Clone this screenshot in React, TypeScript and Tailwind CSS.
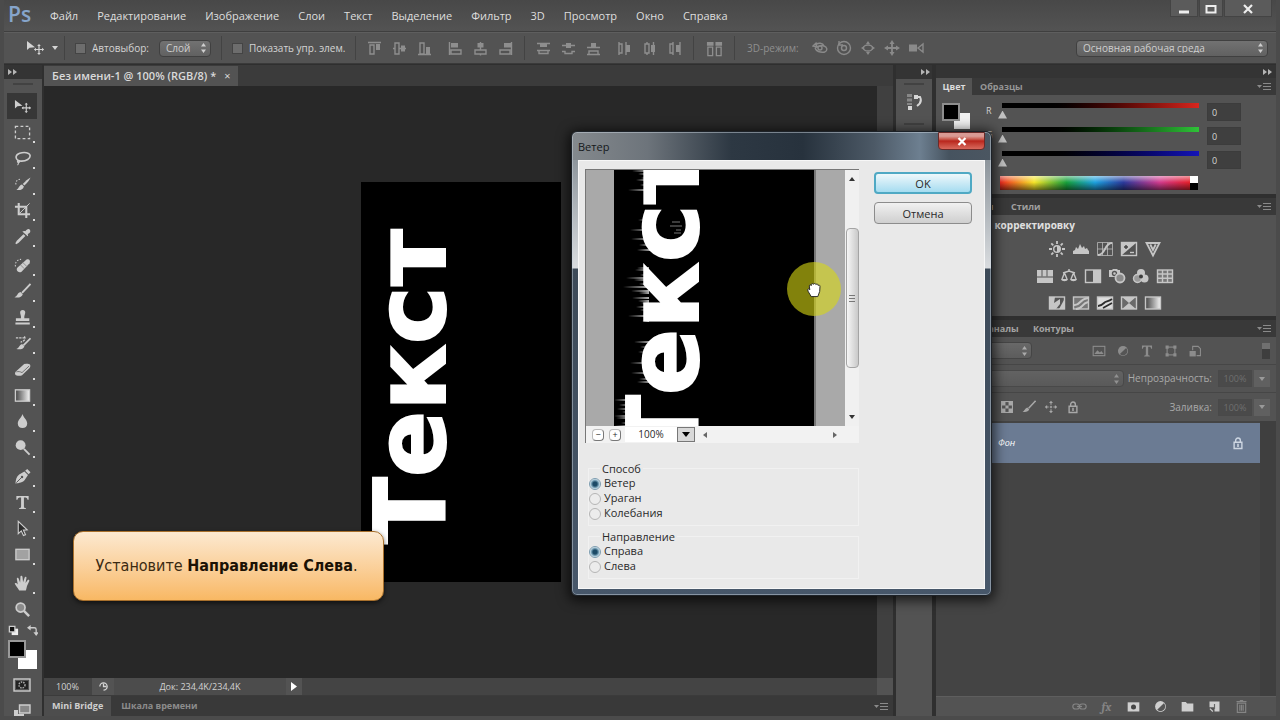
import type { ReactNode } from "react";

const MENU = [
  "Файл",
  "Редактирование",
  "Изображение",
  "Слои",
  "Текст",
  "Выделение",
  "Фильтр",
  "3D",
  "Просмотр",
  "Окно",
  "Справка",
];

function Glyph({
  children,
  size = 18,
  box = 18,
}: {
  children: ReactNode;
  size?: number;
  box?: number;
}) {
  return (
    <svg
      width={size}
      height={size}
      viewBox={`0 0 ${box} ${box}`}
      fill="none"
      stroke="currentColor"
      strokeWidth="1.4"
      aria-hidden="true"
      className="block shrink-0"
    >
      {children}
    </svg>
  );
}

const F = { fill: "currentColor", stroke: "none" };

const moveGlyph = (
  <>
    <path d="M1 2v9l2.600-2.300L9 8.300z" {...F} />
    <path d="M13 6v9M8.500 10.500h9" strokeWidth="1.200" />
    <path d="M13 5l1.800 2h-3.600zM13 16l1.800-2h-3.600zM8 10.500l2-1.800v3.600zM18 10.500l-2-1.800v3.600z" {...F} />
  </>
);

// The toolbar is split into four groups, like the separators in the real one.
const TOOLS: { name: string; icon: ReactNode; corner?: boolean }[][] = [
  [
    { name: "Перемещение", icon: moveGlyph },
    {
      name: "Прямоугольная область",
      corner: true,
      icon: <rect x="1.500" y="2.500" width="15" height="13" strokeDasharray="3 2.400" />,
    },
    {
      name: "Лассо",
      corner: true,
      icon: (
        <>
          <path d="M4.500 11.500C1 9 1.500 5 6 3.500s10.500-1 11 2.300-4 6-9 6c-1.500 0-2.500-.2-3.500-.8z" strokeWidth="1.700" />
          <path d="M4.500 11c-1.500 1-1 2.500.5 2.200s1.500-2 0-2.200M4.500 13c.5 1.500 0 2.500-.8 3" strokeWidth="1.200" />
        </>
      ),
    },
    {
      name: "Быстрое выделение",
      corner: true,
      icon: (
        <>
          <path d="M17.500 1.500c-1 2.500-4 6.500-6.500 8.500l-1.700-1.600C11.500 6 15 2.800 17.500 1.500z" {...F} />
          <path d="M8.500 9l2 2c-1 3.500-4.500 4.500-8 3.500 2.500-.5 2.800-5 6-5.500z" {...F} />
          <path d="M2 9c-.5-3.500 2-6 6-5.500" strokeDasharray="1.600 1.600" strokeWidth="1.100" />
        </>
      ),
    },
    {
      name: "Рамка",
      corner: true,
      icon: (
        <>
          <path d="M5 1v12h12M1 5h12v12" strokeWidth="2.200" />
          <path d="M6 12L16.500 1.500" strokeWidth="1" />
        </>
      ),
    },
    {
      name: "Пипетка",
      corner: true,
      icon: (
        <>
          <path d="M10 3.500c1-1 2 0 2 0s1.500-3 3.500-2.500 2 2.500 1.500 3.500-2.500 2-2.500 2 1 1.200 0 2.200L8.800 3.800z" {...F} />
          <path d="M10.500 7l-7 7L2 16.500 4.500 15l7-7" />
        </>
      ),
    },
  ],
  [
    {
      name: "Точечная восстанавливающая кисть",
      corner: true,
      icon: (
        <>
          <path d="M3.500 11.500L13 3c2-1.500 5 .5 3.500 3.500L8 15.500c-3 2-6.500-1-4.500-4z" {...F} />
          <path d="M7 8.500l4 4M9.500 6l4 4" stroke="#8a8a8a" strokeWidth="1" />
          <path d="M1.500 10c-.5-4 1.500-7 6-7.500" strokeDasharray="1.600 1.600" strokeWidth="1.100" />
        </>
      ),
    },
    {
      name: "Кисть",
      corner: true,
      icon: (
        <>
          <path d="M17.500 1L8.500 10.500" strokeWidth="2" />
          <path d="M6.800 9.500l2.500 2.300c-1 3-4.500 4.200-8.800 3.200 3-.8 3-4.500 6.300-5.500z" {...F} />
        </>
      ),
    },
    {
      name: "Штамп",
      corner: true,
      icon: (
        <path d="M6.500 3.800a2.700 2.700 0 0 1 5.400 0c0 2-1.200 3-1 6h5.300v3H2v-3h5.400c.2-3-.9-4-.9-6zM1.500 14.300h15.200v2H1.500z" {...F} />
      ),
    },
    {
      name: "Архивная кисть",
      corner: true,
      icon: (
        <>
          <path d="M17.500 3.500L10 11" strokeWidth="1.900" />
          <path d="M8.500 9.500l2.500 2.300c-1 3-4.500 4-8.500 3 3-.8 3-4.300 6-5.300z" {...F} />
          <path d="M2 3h9M11 1.500c2 3-1 5.500-4 6" strokeWidth="1.300" strokeDasharray="2.500 1" />
        </>
      ),
    },
    {
      name: "Ластик",
      corner: true,
      icon: (
        <>
          <path d="M2 11l8.500-7.500c1-.8 5.500-1 6.500.5.800 1.500 0 3-1 4L8.500 15C7 16 2.500 16 1.500 14.500.8 13.500 1 12 2 11z" {...F} />
          <path d="M2.500 11.500c2-.6 4-.4 6 .8l7.500-7" stroke="#6f6f6f" strokeWidth="1" />
        </>
      ),
    },
    {
      name: "Градиент",
      corner: true,
      icon: (
        <>
          <defs>
            <linearGradient id="tool-fade">
              <stop stopColor="#444" />
              <stop offset="1" stopColor="#f4f4f4" />
            </linearGradient>
          </defs>
          <rect x="1.500" y="3" width="15" height="12" fill="url(#tool-fade)" />
        </>
      ),
    },
    {
      name: "Размытие",
      corner: true,
      icon: <path d="M9 1c1 4 5 6 5 10.200C14 14.500 11.800 16 9 16s-5-1.500-5-4.800C4 7 8 5 9 1z" {...F} />,
    },
    {
      name: "Осветлитель",
      corner: true,
      icon: (
        <>
          <circle cx="7" cy="6.500" r="5.200" {...F} />
          <path d="M10.500 10.500l6 6" strokeWidth="2" />
        </>
      ),
    },
  ],
  [
    {
      name: "Перо",
      corner: true,
      icon: (
        <>
          <path d="M1.500 16.500c.5-4 1-7.500 4-9.500L11 3.800l3.800 3.700-3.300 5c-2 3-6 3.500-10 4zM11.800 3l2.200-2 3.500 3.500-2 2.200z" {...F} />
          <path d="M2.500 15.500L8 10" stroke="#535353" strokeWidth="1" />
          <circle cx="8.500" cy="9.500" r="1.300" fill="#535353" stroke="none" />
        </>
      ),
    },
    {
      name: "Горизонтальный текст",
      corner: true,
      icon: <path d="M2.500 2h13v4h-1.200c-.2-1.800-.8-2.400-3.800-2.400V13c0 1.500.5 1.800 2.200 2v1H5.300v-1c1.700-.2 2.200-.5 2.200-2V3.600c-3 0-3.600.6-3.800 2.400H2.500z" {...F} />,
    },
    {
      name: "Выделение контура",
      corner: true,
      icon: <path d="M4.500 1.500v13l3.200-3 2.300 5 2.200-1-2.300-4.800 4-.4z" fill="#2c2c2c" strokeWidth="1.200" />,
    },
    {
      name: "Прямоугольник",
      corner: true,
      icon: <rect x="2" y="3.500" width="14" height="11" fill="#a2a2a2" />,
    },
  ],
  [
    {
      name: "Рука",
      corner: true,
      icon: (
        <path d="M5.500 16.500C4 13.500 1.500 11 .8 9.300c0-1.300 1.700-1.300 3.200.7L3 4.300c-.2-1.500 1.500-1.800 2-.4l1.500 4L6.800 2c0-1.500 2-1.500 2.200 0l.6 5.600 1.700-5c.5-1.300 2.100-.9 1.900.6l-1 5.400 2.300-3.200c.9-1.100 2.200-.2 1.600 1.100L14 11c-.7 2-.8 3.600-1.500 5.500z" {...F} />
      ),
    },
    {
      name: "Масштаб",
      icon: (
        <>
          <circle cx="7" cy="7" r="4.700" fill="#8b8b8b" strokeWidth="1.800" />
          <path d="M10.500 10.500l5.500 5.500" strokeWidth="2.600" />
        </>
      ),
    },
  ],
];

const ALIGN_ICONS: ReactNode[][] = [
  [
    <>
      <path d="M1 1.500h13M3 4v9h4V4z" />
      <path d="M9 3h4v6H9z" {...F} />
    </>,
    <>
      <path d="M1 7.500h2M7 7.500h7M3 2v11h4V2z" />
      <path d="M9 4.500h4v6H9z" {...F} />
    </>,
    <>
      <path d="M1 13.500h13M3 2v11h4V2z" />
      <path d="M9 6h4v7H9z" {...F} />
    </>,
    <>
      <path d="M1.500 1v13M3 9h10v4H3z" />
      <path d="M3 2h7v4.500H3z" {...F} />
    </>,
    <>
      <path d="M7.500 1v8M7.500 13v1.500M2 9h11v4H2z" />
      <path d="M4.500 2h6v4.500h-6z" {...F} />
    </>,
    <>
      <path d="M13.500 1v13M2 9h10v4H2z" />
      <path d="M6 2h7v4.500H6z" {...F} />
    </>,
  ],
  [
    <>
      <path d="M1 2.500h13M1 9.500h13M3 9.500v3h9v-3" />
      <path d="M4 3h7v3H4z" {...F} />
    </>,
    <>
      <path d="M1 4.500h13M1 10.500h3v2h7v-2h3" />
      <path d="M5 2h5v5H5z" {...F} />
    </>,
    <>
      <path d="M1 6.500h13M1 13.500h13M3 13v-3h9v3" />
      <path d="M5 2h5v4H5z" {...F} />
    </>,
    <>
      <path d="M2 1v13M2 3h3v9H2M9 1v13" />
      <path d="M9 4h4v7H9z" {...F} />
    </>,
    <>
      <path d="M5 1v2M5 12v2M3 3h4v9H3zM11.500 1v13" />
      <path d="M9 4h4v7H9z" {...F} />
    </>,
    <>
      <path d="M6 1v13M6 3H3v9h3M13 1v13" />
      <path d="M9 4h4v7H9z" {...F} />
    </>,
  ],
];

const MODE_ICONS: ReactNode[] = [
  <>
    <path d="M3 5c3-3 8-2 9 1 3 1 4 4 1 6M12 6c-3-1-6 0-9 2M3 8c1 3 5 5 10 4M1 6l3-3 1 4z" />
    <circle cx="8" cy="8" r="2" />
  </>,
  <>
    <circle cx="8" cy="8" r="6.500" />
    <circle cx="8" cy="8" r="2.500" />
    <path d="M3 1v4h4" />
  </>,
  <>
    <path d="M8 1L6 4h4zM8 15l-2-3h4zM1 8l3-2v4zM15 8l-3-2v4z" {...F} />
    <ellipse cx="8" cy="8" rx="4.500" ry="3" />
  </>,
  <>
    <path d="M8 0L5.500 4h5zM8 16l-2.500-4h5zM0 8l4-2.500v5zM16 8l-4-2.500v5z" {...F} />
    <path d="M8 3v10M3 8h10" strokeWidth="1.800" />
  </>,
  <>
    <path d="M1 4.500h8v7H1z" {...F} />
    <path d="M10 8l5-4v8z" />
  </>,
];

const ADJUSTMENTS: { name: string; icon: ReactNode }[][] = [
  [
    {
      name: "Яркость/Контрастность",
      icon: (
        <>
          <circle cx="9" cy="9" r="3.300" />
          <path d="M9 5.700a3.300 3.300 0 0 1 0 6.600z" {...F} />
          <path d="M9 1v3M9 14v3M1 9h3M14 9h3M3.300 3.300l2 2M12.700 12.700l2 2M3.300 14.700l2-2M12.700 5.300l2-2" strokeWidth="1.800" />
        </>
      ),
    },
    {
      name: "Уровни",
      icon: <path d="M1 14v-3l2-1 1-3 2 2 2-5 2 4 2-2 1 3 2-1 1 2 1 1v3z" {...F} />,
    },
    {
      name: "Кривые",
      icon: (
        <>
          <path d="M1.500 2.500h15v13h-15zM1.500 9h15M6.500 2.500v13M11.500 2.500v13" strokeWidth="1" opacity=".7" />
          <path d="M2 15c8 0 6-12 14-12" strokeWidth="1.800" />
        </>
      ),
    },
    {
      name: "Экспозиция",
      icon: (
        <>
          <rect x="1.500" y="2.500" width="15" height="13" />
          <path d="M2 3h14L2 15z" {...F} />
          <path d="M4 7h4M6 5v4" stroke="#444" />
          <path d="M10 12.500h4" />
        </>
      ),
    },
    {
      name: "Сочность",
      icon: <path d="M2.500 3h13L9 15.500zM6.300 4.500L9 10l2.700-5.500" strokeWidth="1.800" />,
    },
  ],
  [
    {
      name: "Цветовой тон/Насыщенность",
      icon: (
        <>
          <rect x="1" y="3" width="16" height="13" {...F} />
          <path d="M1 10h16M6 3v7M11 3v7" stroke="#777" />
        </>
      ),
    },
    {
      name: "Цветовой баланс",
      icon: (
        <>
          <path d="M9 2v3M3 6l6-2 6 2M4.500 6L2 12M4.500 6L7 12M13.500 6L11 12M13.500 6l2.500 6" />
          <path d="M1 12h7c-.5 3-6.500 3-7 0zM10 12h7c-.5 3-6.500 3-7 0z" {...F} />
        </>
      ),
    },
    {
      name: "Черно-белое",
      icon: (
        <>
          <rect x="1.500" y="3" width="15" height="12.500" />
          <path d="M9 3h7.500v12.500H9z" {...F} />
        </>
      ),
    },
    {
      name: "Фотофильтр",
      icon: (
        <>
          <path d="M1 3h3l1-1h4l1 1h2v7H1z" {...F} />
          <circle cx="6.500" cy="6.500" r="2" stroke="#555" />
          <circle cx="12" cy="11" r="4.500" fill="#8a8a8a" strokeWidth="1.800" />
        </>
      ),
    },
    {
      name: "Микширование каналов",
      icon: (
        <>
          <circle cx="9" cy="6" r="4" {...F} />
          <circle cx="5.500" cy="11.500" r="4" fill="#9a9a9a" />
          <circle cx="12.500" cy="11.500" r="4" {...F} />
          <circle cx="9" cy="9.500" r="2" fill="#3c3c3c" stroke="none" />
        </>
      ),
    },
    {
      name: "Поиск цвета",
      icon: (
        <>
          <rect x="1.500" y="3" width="15" height="12.500" fill="#777" />
          <path d="M1.500 7h15M1.500 11.300h15M6.500 3v12.500M11.500 3v12.500" />
        </>
      ),
    },
  ],
  [
    {
      name: "Инверсия",
      icon: (
        <>
          <rect x="1.500" y="3" width="15" height="12" fill="#555" />
          <path d="M2 15V3h5l-1 6 6-4v5l-4 5zM16 3v12h-5l5-9z" {...F} />
        </>
      ),
    },
    {
      name: "Постеризация",
      icon: (
        <>
          <rect x="1.500" y="3" width="15" height="12" fill="#777" />
          <path d="M2 11c6 1 5-6 14-7M4 15c7 0 5-5 12-7" strokeWidth="2" />
        </>
      ),
    },
    {
      name: "Изогелия",
      icon: (
        <>
          <rect x="1.500" y="3" width="15" height="12" fill="#ddd" />
          <path d="M2 12c3 0 4-1 6-3s4-1 8-4M7 14l9-5" stroke="#2d2d2d" strokeWidth="1.800" />
        </>
      ),
    },
    {
      name: "Выборочная коррекция цвета",
      icon: (
        <>
          <rect x="1.500" y="3" width="15" height="12" fill="#6a6a6a" />
          <path d="M2 3h14l-7 6zM2 15h14L9 9z" {...F} />
        </>
      ),
    },
    {
      name: "Карта градиента",
      icon: <rect x="1.500" y="3" width="15" height="12" fill="url(#tool-fade)" />,
    },
  ],
];

const trashGlyph = <path d="M4 5h10v11H4zM3 3h12M7 2h4M7 7v7M9 7v7M11 7v7" />;
const brushGlyph = TOOLS[1][1].icon;
const halfCircle = (
  <>
    <circle cx="9" cy="9" r="6.500" {...F} />
    <path d="M5 13L13 5A5.600 5.600 0 0 1 5 13z" fill="#555" stroke="none" />
  </>
);
const fourWay = (
  <>
    <path d="M9 3v12M3 9h12" strokeDasharray="3 1.500" />
    <path d="M9 1L6.500 4h5zM9 17l-2.500-3h5zM1 9l3-2.500v5zM17 9l-3-2.500v5z" {...F} />
  </>
);
const padlock = (
  <>
    <path d="M4 8h10v8H4z" strokeWidth="1.800" />
    <path d="M6 8V5.500a3 3 0 0 1 6 0V8" strokeWidth="1.800" />
    <path d="M9 10v4" strokeWidth="2" />
  </>
);

const FILTERS: { name: string; icon: ReactNode }[] = [
  {
    name: "Пиксельные слои",
    icon: (
      <>
        <rect x="1.500" y="3" width="15" height="12" />
        <path d="M3 13l4-5 3 3 2-2 3 4z" {...F} />
      </>
    ),
  },
  { name: "Корректирующие слои", icon: halfCircle },
  { name: "Текстовые слои", icon: TOOLS[2][1].icon },
  {
    name: "Слои-фигуры",
    icon: (
      <>
        <rect x="4" y="4" width="10" height="10" />
        <path d="M2 2h4v4H2zM12 2h4v4h-4zM2 12h4v4H2zM12 12h4v4h-4z" {...F} />
      </>
    ),
  },
  {
    name: "Смарт-объекты",
    icon: (
      <>
        <path d="M6 8V3h7l3 3v9h-5" />
        <path d="M2 9h8v7H2z" {...F} />
      </>
    ),
  },
];

const LAYER_ACTIONS: { name: string; dim?: boolean; icon: ReactNode }[] = [
  {
    name: "Связать слои",
    dim: true,
    icon: (
      <>
        <rect x="1" y="6" width="8" height="6" rx="3" />
        <rect x="9" y="6" width="8" height="6" rx="3" />
        <path d="M6 9h6" />
      </>
    ),
  },
  { name: "Стиль слоя", dim: true, icon: null },
  {
    name: "Маска слоя",
    icon: (
      <>
        <rect x="2" y="4" width="14" height="11" {...F} />
        <circle cx="9" cy="9.500" r="3" fill="#444" stroke="none" />
      </>
    ),
  },
  { name: "Корректирующий слой", icon: halfCircle },
  { name: "Новая группа", icon: <path d="M2 3.500h5l1.500 2H16V15H2z" {...F} /> },
  {
    name: "Новый слой",
    icon: (
      <>
        <path d="M3 3h12v12H9V10H3z" {...F} />
        <path d="M3.500 11.500L7 15" />
        <path d="M9 6v6" stroke="#666" />
      </>
    ),
  },
  { name: "Удалить слой", dim: true, icon: trashGlyph },
];

// Streak lengths of the wind effect; every entry is one streak, the gaps follow from STEPS.
const WIND = [5, 13, 3, 19, 7, 2, 11, 4, 16, 6, 9, 3, 22, 5, 8, 14, 2, 10, 6, 17];
const STEPS = [3, 4, 2, 5, 3, 2, 4];
const WIND_ZONES = [
  { x: 31, from: 48, to: 92 },
  { x: 33, from: 116, to: 152 },
  { x: 31, from: 168, to: 222 },
  { x: 33, from: 242, to: 284 },
  { x: 13, from: 300, to: 356 },
];

const STREAKS = WIND_ZONES.flatMap((zone, z) => {
  const paths: string[] = [];
  let y = zone.from;
  for (let i = 0; y < zone.to; i++) {
    const len = Math.min(WIND[(i * 3 + z * 7) % WIND.length], zone.x);
    paths.push(`M${zone.x - len} ${y}L${zone.x + 4} ${y - 1}v2z`);
    y += STEPS[(i + z) % STEPS.length];
  }
  return paths;
});

function Artwork({ windy = false }: { windy?: boolean }) {
  return (
    <svg
      width="200"
      height="400"
      viewBox="0 0 200 400"
      className="block shrink-0 overflow-visible bg-black"
    >
      {windy && (
        <>
          <path d={STREAKS.join("")} fill="#fff" opacity=".7" />
          <path d="M58 122h8M56 126h12M60 133h7M62 130h5M54 262h6" stroke="#777" />
        </>
      )}
      <text
        transform="translate(84 362) rotate(-90)"
        fill="#fff"
        stroke="#fff"
        strokeWidth="2"
        fontFamily="DejaVu Sans, sans-serif"
        fontWeight="700"
        fontSize="98"
      >
        Текст
      </text>
    </svg>
  );
}

function Chevrons() {
  return (
    <svg width="9" height="6" viewBox="0 0 9 6" className="block" fill="#b5b5b5" aria-hidden="true">
      <path d="M0 0l4 3-4 3zM5 0l4 3-4 3z" />
    </svg>
  );
}

function PanelMenu() {
  return (
    <button aria-label="Меню панели" className="ml-auto px-1 text-[#8a8a8a]">
      <svg width="15" height="9" viewBox="0 0 15 9" className="block" aria-hidden="true">
        <path d="M0 3h5L2.500 6z" fill="currentColor" />
        <path d="M6 1.500h8M6 4.500h8M6 7.500h8" stroke="currentColor" />
      </svg>
    </button>
  );
}

function Spinner() {
  return (
    <svg
      width="7"
      height="10"
      viewBox="0 0 7 10"
      fill="currentColor"
      aria-hidden="true"
      className="pointer-events-none absolute right-1 top-1/2 -translate-y-1/2"
    >
      <path d="M3.500 0L6 3.500H1zM3.500 10L6 6.500H1z" />
    </svg>
  );
}

function Picker({ label, value, className }: { label: string; value: string; className: string }) {
  return (
    <div className={`relative text-[#cfcfcf] ${className}`}>
      <select
        aria-label={label}
        className="block h-[17px] w-full appearance-none rounded-sm border border-[#404040] bg-linear-to-b from-[#727272] to-[#616161] pl-1.5 text-[10px] leading-none font-medium text-inherit"
      >
        <option>{value}</option>
      </select>
      <Spinner />
    </div>
  );
}

function Divider() {
  return <div className="h-6 w-px shrink-0 bg-[#434343]" />;
}

function IconButton({
  label,
  className = "w-[25px]",
  children,
}: {
  label: string;
  className?: string;
  children: ReactNode;
}) {
  return (
    <button aria-label={label} className={`flex shrink-0 items-center justify-center ${className}`}>
      {children}
    </button>
  );
}

function TitleBar() {
  return (
    <header className="flex h-8 shrink-0 items-start border-b border-[#3f3f3f] bg-linear-to-b from-[#484848] to-[#535353]">
      <span className="w-[39px] pl-1 text-[21px] leading-[29px] font-semibold text-[#86a5cb]">Ps</span>
      <nav className="flex items-center gap-[19px] pl-[7px] text-[11px] leading-8 font-medium text-[#dedede]">
        {MENU.map((item) => (
          <a key={item} href="#">
            {item}
          </a>
        ))}
      </nav>
      <div className="mr-1 ml-auto flex gap-px text-[#eeeeee]">
        <button aria-label="Свернуть" className="h-[17px] w-7 border border-t-0 border-[#444] bg-[#5b5b5b]">
          <Glyph size={26} box={26}>
            <path d="M8 12h10" strokeWidth="3" />
          </Glyph>
        </button>
        <button aria-label="Развернуть" className="h-[17px] w-6 border border-t-0 border-[#444] bg-[#5b5b5b]">
          <svg width="22" height="16" viewBox="0 0 22 16" aria-hidden="true">
            <rect x="6.500" y="6" width="9" height="6.500" fill="none" stroke="currentColor" strokeWidth="2" />
          </svg>
        </button>
        <button aria-label="Закрыть" className="flex h-[17px] w-12 justify-center border border-t-0 border-[#444] bg-[#5b5b5b]">
          <svg width="12" height="16" viewBox="0 0 12 16" aria-hidden="true">
            <path d="M2 5l8 8M10 5l-8 8" stroke="currentColor" strokeWidth="2.200" />
          </svg>
        </button>
      </div>
    </header>
  );
}

function OptionsBar() {
  return (
    <div className="flex h-8 shrink-0 items-center border-t border-b border-t-[#5e5e5e] border-b-[#3a3a3a] bg-[#535353] text-[10px] text-[#d4d4d4]">
      <div className="flex w-[60px] items-center gap-2 pl-[22px]">
        <Glyph>{moveGlyph}</Glyph>
        <svg width="6" height="4" viewBox="0 0 6 4" fill="currentColor" aria-hidden="true">
          <path d="M0 0h6L3 4z" />
        </svg>
      </div>
      <Divider />
      <label className="flex w-[94px] items-center gap-1.5 pl-2.5 font-medium">
        <input type="checkbox" className="size-[11px] appearance-none border border-[#444] bg-[#6d6d6d]" />
        Автовыбор:
      </label>
      <Picker label="Автовыбор" value="Слой" className="w-[52px]" />
      <div className="w-2.5" />
      <Divider />
      <label className="flex w-[133px] items-center gap-1.5 pl-2.5 font-medium">
        <input type="checkbox" className="size-[11px] appearance-none border border-[#444] bg-[#6d6d6d]" />
        <span className="whitespace-nowrap">Показать упр. элем.</span>
      </label>
      <Divider />
      {ALIGN_ICONS.map((set, s) => (
        <div key={s} className="flex items-center text-[#8e8e8e]">
          <div className="flex px-[6px]">
            {set.slice(0, 3).map((icon, i) => (
              <IconButton key={i} label={`Выравнивание ${i + 1}`}>
                <Glyph size={15} box={15}>{icon}</Glyph>
              </IconButton>
            ))}
          </div>
          <div className="flex pr-[6px]">
            {set.slice(3).map((icon, i) => (
              <IconButton key={i} label={`Распределение ${i + 1}`}>
                <Glyph size={15} box={15}>{icon}</Glyph>
              </IconButton>
            ))}
          </div>
          <Divider />
        </div>
      ))}
      <IconButton label="Автоматическое выравнивание" className="w-10 text-[#8e8e8e]">
        <Glyph size={17}>
          <path d="M1 2h7v4H1zM10 2h7v4h-7z" {...F} />
          <path d="M2 7.500h5v9H2zM11 7.500h5v9h-5z" />
        </Glyph>
      </IconButton>
      <Divider />
      <span className="w-[73px] pl-3 whitespace-nowrap text-[#8f8f8f]">3D-режим:</span>
      <div className="flex text-[#8a8a8a]">
        {MODE_ICONS.map((icon, i) => (
          <IconButton key={i} label={`3D-режим ${i + 1}`} className="w-6">
            <Glyph size={16} box={16}>{icon}</Glyph>
          </IconButton>
        ))}
      </div>
      <Picker label="Рабочая среда" value="Основная рабочая среда" className="mr-2 ml-auto w-48" />
    </div>
  );
}

function Toolbar() {
  return (
    <aside className="flex w-[38px] shrink-0 flex-col bg-[#535353] text-[#cdcdcd]">
      <div className="flex h-[14px] shrink-0 items-center bg-[#343434] pl-1">
        <Chevrons />
      </div>
      <div className="mx-auto mt-1 mb-2 h-0.5 w-5 shrink-0 bg-[#424242]" />
      {TOOLS.map((group, g) => (
        <div key={g} className="mb-[3px] flex flex-col pl-[3px]">
          {group.map((tool, i) => (
            <button
              key={tool.name}
              aria-label={tool.name}
              className={`relative flex h-[26px] w-[30px] items-center justify-center ${
                g === 0 && i === 0 ? "bg-[#373737]" : ""
              }`}
            >
              <Glyph size={17}>{tool.icon}</Glyph>
              {tool.corner && <i className="absolute right-0.5 bottom-0.5 size-0.5 bg-[#dcdcdc]" />}
            </button>
          ))}
        </div>
      ))}
      <div className="flex items-center justify-between px-1">
        <Glyph size={11} box={12}>
          <path d="M4 4h7v7H4z" fill="#eee" stroke="none" />
          <path d="M1.500 1.500h6v6h-6z" fill="#111" />
        </Glyph>
        <Glyph size={11} box={12}>
          <path d="M3 3h5c1 0 2 1 2 2v4" />
          <path d="M0 3l4-3v6zM10 12L7 8h6z" {...F} />
        </Glyph>
      </div>
      <div className="relative mt-1 h-[32px] shrink-0">
        <div className="absolute top-[10px] left-3.5 size-[19px] bg-white" />
        <div className="absolute top-0 left-1 size-[18px] border-2 border-[#999] bg-black" />
      </div>
      <button aria-label="Быстрая маска" className="mt-1 pl-[9px]">
        <Glyph size={18}>
          <rect x="1" y="3" width="16" height="12" />
          <rect x="3" y="5" width="12" height="8" fill="#222" stroke="none" />
          <circle cx="9" cy="9" r="3" stroke="#aaa" strokeDasharray="1.500 1" />
        </Glyph>
      </button>
      <button aria-label="Режим экрана" className="mt-2 pl-[9px]">
        <Glyph size={18}>
          <path d="M6.500 3h10.500v8H6.500z" fill="#888" />
          <path d="M1 8h4v4h6v4H1z" {...F} />
        </Glyph>
      </button>
    </aside>
  );
}

function DocumentArea() {
  return (
    <main className="ml-0.5 flex min-w-0 flex-1 flex-col bg-[#3b3b3b]">
      <div className="flex h-[21px] shrink-0 items-end">
        <div className="flex h-5 items-center gap-2 bg-[#535353] px-2 text-[11px] font-semibold text-[#dadada]">
          Без имени-1 @ 100% (RGB/8) *
          <button aria-label="Закрыть документ" className="font-normal">
            ×
          </button>
        </div>
      </div>
      <div className="flex min-h-0 flex-1">
        <div className="flex flex-1 items-center justify-center bg-[#282828]">
          <Artwork />
        </div>
        <div className="w-4 bg-[#404040]" />
      </div>
      <div className="flex h-[17px] shrink-0 items-center bg-[#444] text-[9px] font-medium text-[#d2d2d2]">
        <span className="w-12 pl-3">100%</span>
        <span className="flex h-full w-[22px] items-center justify-center bg-[#535353]">
          <Glyph size={11} box={12}>
            <path d="M2 6a4 4 0 1 1 4 4M6 3v3h3" />
          </Glyph>
        </span>
        <span className="h-full w-[172px] bg-[#4c4c4c] text-center leading-[17px]">Док: 234,4K/234,4K</span>
        <button aria-label="Сведения о документе" className="flex h-full w-4 items-center justify-center bg-[#535353]">
          <svg width="6" height="9" viewBox="0 0 6 9" fill="#fff" aria-hidden="true">
            <path d="M0 0l6 4.500L0 9z" />
          </svg>
        </button>
        <div className="ml-auto h-full w-4 bg-[#535353]" />
      </div>
      <div className="mt-px flex h-5 shrink-0 items-center bg-[#393939] text-[9px] font-bold">
        <button className="h-full bg-[#4d4d4d] px-2 text-[#cfcfcf]">Mini Bridge</button>
        <button className="px-2.5 font-bold text-[#8c8c8c]">Шкала времени</button>
        <PanelMenu />
      </div>
    </main>
  );
}

function HistoryDock() {
  return (
    <aside className="ml-[3px] flex w-9 shrink-0 flex-col bg-[#535353]">
      <div className="flex h-[14px] shrink-0 items-center justify-end bg-[#343434] pr-0.5">
        <Chevrons />
      </div>
      <div className="mx-auto mt-1 h-0.5 w-5 bg-[#424242]" />
      <button aria-label="История" className="mx-auto mt-2 mb-3 text-[#d6d6d6]">
        <Glyph size={18}>
          <path d="M2 1h5v3H2zM2 5.500h5v3H2zM2 10h5v2H2z" fill="#888" stroke="none" />
          <path d="M3 13h4v4H3z" {...F} />
          <path d="M11 4h4c2 4 0 7-3 9" strokeWidth="2" />
          <path d="M9 2h4v4H9z" {...F} />
        </Glyph>
      </button>
      <div className="mx-auto h-0.5 w-5 bg-[#424242]" />
    </aside>
  );
}

const CHANNELS = [
  { name: "R", track: "bg-linear-to-r from-black from-20% to-[#d8261e]" },
  { name: "G", track: "bg-linear-to-r from-black from-20% to-[#2fc338]" },
  { name: "B", track: "bg-linear-to-r from-black from-20% to-[#1414b8]" },
];

function ColorPanel() {
  return (
    <section className="shrink-0 bg-[#535353]">
      <div className="flex h-[17px] items-center bg-[#393939] text-[9px]">
        <button className="h-full w-9 bg-[#535353] text-center font-bold text-[#dcdcdc]">Цвет</button>
        <button className="px-2 font-bold text-[#969696]">Образцы</button>
        <PanelMenu />
      </div>
      <div className="flex h-[99px] pt-2 pl-1.5">
        <div className="relative w-[42px]">
          <div className="absolute top-[10px] left-3 size-4 bg-[#f1f1f1]" />
          <div className="absolute top-0 left-0 size-[18px] border-2 border-[#8f8f8f] bg-black" />
        </div>
        <div className="flex-1">
          {CHANNELS.map((c) => (
            <div key={c.name} className="flex h-6 items-start">
              <label htmlFor={`ch-${c.name}`} className="w-3.5 pl-0.5 text-[9px] leading-4 text-[#cfcfcf]">
                {c.name}
              </label>
              <input
                id={`ch-${c.name}`}
                type="range"
                min={0}
                max={255}
                defaultValue={0}
                className={`h-4 w-[205px] appearance-none bg-size-[calc(100%-8px)_5px] bg-position-[top_center] bg-no-repeat [&::-webkit-slider-thumb]:mt-[7px] [&::-webkit-slider-thumb]:h-2 [&::-webkit-slider-thumb]:w-[9px] [&::-webkit-slider-thumb]:appearance-none [&::-webkit-slider-thumb]:bg-[#c0c0c0] [&::-webkit-slider-thumb]:[clip-path:polygon(50%_0,100%_100%,0_100%)] ${c.track}`}
              />
              <input
                aria-label={`Значение ${c.name}`}
                defaultValue="0"
                className="ml-1 h-[18px] w-[34px] border border-[#3c3c3c] bg-[#3f3f3f] pl-1 text-[9px] text-[#d6d6d6]"
              />
            </div>
          ))}
          <div className="mt-px ml-4 flex h-3.5 w-[198px]">
            <div className="flex-1 bg-[linear-gradient(to_bottom,rgba(255,255,255,.55),transparent_45%,rgba(0,0,0,.55)),linear-gradient(to_right,#ee2a20,#f5e52a_18%,#18a03c_35%,#1ea2e0_50%,#2c3a9c_65%,#d23c8e_84%,#e5202a)]" />
            <div className="w-2 bg-linear-to-b from-white from-50% to-black to-50%" />
          </div>
        </div>
      </div>
    </section>
  );
}

function AdjustmentsPanel() {
  return (
    <section className="mt-1 shrink-0 bg-[#535353]">
      <div className="flex h-[17px] items-center bg-[#393939] text-[9px]">
        <button className="h-full w-[65px] text-center font-semibold text-[#c4c4c4]">Коррекция</button>
        <button className="px-2.5 font-bold text-[#a0a0a0]">Стили</button>
        <PanelMenu />
      </div>
      <p className="w-[139px] text-right text-[10px] leading-5 font-bold whitespace-nowrap text-[#e0e0e0]">
        Добавить корректировку
      </p>
      <div className="flex flex-col pr-0.5 text-[#c6c6c6]">
        {ADJUSTMENTS.map((row, r) => (
          <div key={r} className="flex h-[27px] items-center justify-center gap-[6px]">
            {row.map((a) => (
              <IconButton key={a.name} label={a.name} className="w-[18px]">
                <Glyph>{a.icon}</Glyph>
              </IconButton>
            ))}
          </div>
        ))}
      </div>
    </section>
  );
}

function Percent({ label, id }: { label: string; id: string }) {
  return (
    <>
      <label htmlFor={id} className="ml-auto text-[10px] whitespace-nowrap text-[#a9a9a9]">
        {label}
      </label>
      <input
        id={id}
        defaultValue="100%"
        className="ml-1.5 h-[17px] w-[34px] border border-[#494949] bg-[#4a4a4a] text-center text-[9px] text-[#6f6f6f]"
      />
      <button aria-label={`${label} список`} className="mr-1.5 ml-0.5 flex h-[17px] w-4 items-center justify-center bg-[#606060]">
        <svg width="6" height="4" viewBox="0 0 6 4" fill="#9a9a9a" aria-hidden="true">
          <path d="M0 0h6L3 4z" />
        </svg>
      </button>
    </>
  );
}

function LayersPanel() {
  return (
    <section className="mt-1 flex min-h-0 flex-1 flex-col bg-[#535353]">
      <div className="flex h-[17px] shrink-0 items-center bg-[#393939] text-[9px] font-bold text-[#a5a5a5]">
        <button className="h-full w-10 bg-[#535353] text-[#dcdcdc]">Слои</button>
        <button className="w-[49px] text-center">Каналы</button>
        <button className="px-2">Контуры</button>
        <PanelMenu />
      </div>
      <div className="flex h-7 shrink-0 items-center border-b border-[#464646] pl-1.5">
        <Picker label="Фильтр слоев" value="Вид" className="w-[90px] opacity-70" />
        <div className="flex pl-[55px] text-[#8c8c8c]">
          {FILTERS.map((f) => (
            <IconButton key={f.name} label={f.name} className="w-6">
              <Glyph size={14}>{f.icon}</Glyph>
            </IconButton>
          ))}
        </div>
        <div className="mr-1.5 ml-auto h-4 w-2 bg-linear-to-b from-[#707070] from-40% to-[#3e3e3e] to-40%" />
      </div>
      <div className="flex h-7 shrink-0 items-center border-b border-[#464646] pl-1.5">
        <Picker label="Режим наложения" value="Норма" className="w-[182px] opacity-50" />
        <Percent id="layer-opacity" label="Непрозрачность:" />
      </div>
      <div className="flex h-7 shrink-0 items-center pl-1.5 text-[#a8a8a8]">
        <span className="w-[58px] text-[9px]">Закрепить:</span>
        <div className="flex gap-2">
          <Glyph size={14}>
            <rect x="2" y="2" width="14" height="14" />
            <path d="M2 2h5v5H2zM11 2h5v5h-5zM7 7h4v4H7zM2 11h5v5H2zM11 11h5v5h-5z" {...F} />
          </Glyph>
          <Glyph size={14}>{brushGlyph}</Glyph>
          <Glyph size={14}>{fourWay}</Glyph>
          <Glyph size={14}>{padlock}</Glyph>
        </div>
        <Percent id="layer-fill" label="Заливка:" />
      </div>
      <div className="flex min-h-0 flex-1 bg-[#444]">
        <div className="min-w-0 flex-1">
          <div className="mt-0.5 flex h-10 items-center bg-[#6b7b93] pr-[15px] pl-[62px] text-[9px] text-white italic">
            <span className="flex-1">Фон</span>
            <span className="text-[#cdd6e2]">
              <Glyph size={14}>{padlock}</Glyph>
            </span>
          </div>
        </div>
        <div className="w-4 bg-[#3f3f3f]" />
      </div>
      <div className="flex h-5 shrink-0 items-center justify-end border-t border-[#5e5e5e] pr-[21px] text-[#cfcfcf]">
        {LAYER_ACTIONS.map((a) => (
          <IconButton
            key={a.name}
            label={a.name}
            className={a.dim ? "w-[27px] text-[#858585]" : "w-[27px]"}
          >
            {a.icon ? (
              <Glyph size={15}>{a.icon}</Glyph>
            ) : (
              <span className="font-serif text-[12px] leading-none font-bold italic">fx</span>
            )}
          </IconButton>
        ))}
      </div>
    </section>
  );
}

function RadioGroup({ legend, name, options }: { legend: string; name: string; options: string[] }) {
  return (
    <fieldset className="ml-[3px] border border-[#f1f1f1] pb-1">
      <legend className="ml-[11px] px-0.5 leading-[15px]">{legend}</legend>
      {options.map((option, i) => (
        <label key={option} className="flex h-[15px] items-center gap-[3px]">
          <input
            type="radio"
            name={name}
            defaultChecked={i === 0}
            className="size-3 appearance-none rounded-full border border-[#b5b5b5] bg-[#ececec] checked:border-[#7d9db0] checked:bg-[radial-gradient(circle,#1c4a66_0_2px,#8db4c8_4px,#dfeaf0_5px)]"
          />
          {option}
        </label>
      ))}
    </fieldset>
  );
}

function WindDialog() {
  return (
    <div
      role="dialog"
      aria-label="Ветер"
      className="absolute top-[131px] left-[567px] flex w-[421px] flex-col rounded-md border border-[#1d2228] bg-[linear-gradient(to_bottom,transparent_28px,#8d959c_28px,#d9dcdf_136px,#3d4a58_137px,#47576a_100%),linear-gradient(to_right,#84898d,#6d747b_18%,#2d3843_38%,#27323d_55%,#4c5966_72%,#6d7f90_83%,#46535f_90%,#4b5661)] px-1.5 pb-1.5 text-[11px] text-[#2a2a2a] shadow-[0_2px_12px_3px_rgba(0,0,0,.65),inset_0_0_0_1px_rgba(200,210,220,.5)]"
    >
      <div className="flex h-7 items-start justify-between">
        <h2 className="leading-[29px] text-[#15181b]">Ветер</h2>
        <button
          aria-label="Закрыть"
          className="flex h-[18px] w-[47px] items-center justify-center rounded-b border border-[#6b2a28] bg-linear-to-b from-[#d99a94] from-20% via-[#b9241c] via-50% to-[#d8685c] text-white"
        >
          <svg width="10" height="9" viewBox="0 0 10 9" aria-hidden="true">
            <path d="M1.500 1l7 7M8.500 1l-7 7" stroke="currentColor" strokeWidth="2.200" />
          </svg>
        </button>
      </div>
      <div className="flex gap-[15px] border border-[#f7f7f7] bg-[#e9e9e9] px-1.5 pt-2">
        <div className="w-[274px] pb-[9px]">
          <div className="border-t border-l border-[#777] bg-[#f2f2f2]">
            <div className="flex h-[256px]">
              <div className="flex flex-1 items-end overflow-hidden bg-[#a9a9a9] pl-[28px]">
                <div className="flex h-full flex-col border-r-2 border-[#777]">
                  <div className="-mt-[70px]">
                    <Artwork windy />
                  </div>
                </div>
              </div>
              <div className="flex w-[14px] flex-col items-center justify-between bg-[#f0f0f0] py-[7px]">
                <svg width="6" height="4" viewBox="0 0 6 4" fill="#333" aria-hidden="true">
                  <path d="M0 4h6L3 0z" />
                </svg>
                <div className="flex h-[140px] w-[13px] flex-col items-center justify-center gap-0.5 rounded-sm border border-[#a4a4a4] bg-linear-to-r from-[#f6f6f6] to-[#c9c9c9]">
                  <i className="h-px w-1.5 bg-[#777]" />
                  <i className="h-px w-1.5 bg-[#777]" />
                  <i className="h-px w-1.5 bg-[#777]" />
                </div>
                <svg width="6" height="4" viewBox="0 0 6 4" fill="#333" aria-hidden="true">
                  <path d="M0 0h6L3 4z" />
                </svg>
              </div>
            </div>
            <div className="flex h-[17px] items-center text-[9px]">
              <div className="flex gap-[5px] pl-1.5">
                <button aria-label="Уменьшить" className="flex size-3 items-center justify-center rounded-sm border border-[#bbb] border-r-[#777] border-b-[#777] bg-white leading-none">
                  −
                </button>
                <button aria-label="Увеличить" className="flex size-3 items-center justify-center rounded-sm border border-[#bbb] border-r-[#777] border-b-[#777] bg-white leading-none">
                  +
                </button>
              </div>
              <input
                aria-label="Масштаб"
                defaultValue="100%"
                className="ml-1 h-[15px] w-[52px] bg-white text-center text-[10px]"
              />
              <button aria-label="Список масштабов" className="flex h-[15px] w-[18px] items-center justify-center border border-[#777] bg-[#d8d8d8]">
                <svg width="8" height="5" viewBox="0 0 8 5" fill="#000" aria-hidden="true">
                  <path d="M0 0h8L4 5z" />
                </svg>
              </button>
              <div className="flex flex-1 justify-between pr-[22px] pl-2 text-[#666]">
                <svg width="4" height="6" viewBox="0 0 4 6" fill="currentColor" aria-hidden="true">
                  <path d="M4 0v6L0 3z" />
                </svg>
                <svg width="4" height="6" viewBox="0 0 4 6" fill="currentColor" aria-hidden="true">
                  <path d="M0 0v6l4-3z" />
                </svg>
              </div>
            </div>
          </div>
          <div className="mt-[18px] flex flex-col gap-[3px]">
            <RadioGroup legend="Способ" name="method" options={["Ветер", "Ураган", "Колебания"]} />
            <RadioGroup legend="Направление" name="direction" options={["Справа", "Слева"]} />
          </div>
        </div>
        <div className="flex flex-1 flex-col gap-2 pt-[3px] pr-[6px]">
          <button className="h-[22px] rounded-sm border-2 border-[#4fa9c4] bg-linear-to-b from-[#eef8fb] to-[#a5dcf0] leading-none">
            OK
          </button>
          <button className="h-[22px] rounded-sm border border-[#8c8c8c] bg-linear-to-b from-[#f1f1f1] to-[#cfcfcf] leading-none">
            Отмена
          </button>
        </div>
      </div>
    </div>
  );
}

export default function App() {
  return (
    <div className="relative flex h-screen flex-col overflow-hidden border-x-4 border-b-4 border-[#4b4b4b] bg-[#2f2f2f] font-['Open_Sans','Noto_Sans',sans-serif]">
      <TitleBar />
      <OptionsBar />
      <div className="flex min-h-0 flex-1 pt-px">
        <Toolbar />
        <DocumentArea />
        <HistoryDock />
        <div className="ml-1 flex w-[340px] shrink-0 flex-col">
          <div className="flex h-[13px] shrink-0 items-center justify-end bg-[#343434] pr-1">
            <Chevrons />
          </div>
          <ColorPanel />
          <AdjustmentsPanel />
          <LayersPanel />
        </div>
      </div>

      <p className="absolute top-[531px] left-[69px] w-[311px] rounded-[10px] border border-[#a8702c] bg-linear-to-b from-[#fce9d0] to-[#f8b863] pr-1 text-center font-['DejaVu_Sans_Condensed','Open_Sans',sans-serif] text-[16px] leading-[68px] whitespace-nowrap text-[#3a2a12] shadow-[0_2px_5px_rgba(0,0,0,.6)]">
        Установите <b className="text-[#1b1205]">Направление Слева</b>.
      </p>

      <WindDialog />

      <div className="absolute top-[262px] left-[783px] flex size-[54px] items-center justify-center rounded-full bg-[#d9d914]/60">
        <svg width="17" height="17" viewBox="0 0 18 18" aria-hidden="true">
          <path
            d="M5.500 16.500C4 13.500 2 11.500 1.800 9.300c.2-1.300 1.500-1.300 2.200 0L3.500 5.300c0-1.500 1.700-1.800 2-.4V4c0-1.500 2-1.500 2.500-.5.500-1.300 2.300-1 2.500.3.700-1 2.300-.6 2.300.9.900-.7 2.200-.2 2 1.100L14.500 11c-.7 2-1.300 3.600-2 5.500z"
            fill="#fff"
            stroke="#222"
          />
        </svg>
      </div>
    </div>
  );
}
